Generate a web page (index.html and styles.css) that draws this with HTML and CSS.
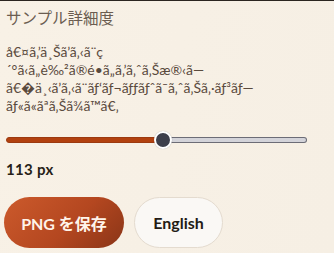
FILE: index.html
```html
<!DOCTYPE html>
<html lang="ja">
<head>
<meta charset="utf-8">
<link rel="stylesheet" href="styles.css">
</head>
<body>
<div class="panel">
  <h2 class="title">サンプル詳細度</h2>
  <p class="desc">å€¤ã‚’ä¸Šã’ã‚‹ã¨ç<wbr>´°ã‹ã„è‰²ã®é•ã„ã‚’ã‚ˆã‚Šæ®‹ã—ã€�ä¸‹ã’ã‚‹ã¨ãƒ‘ãƒ¬ãƒƒãƒˆã¯ã‚ˆã‚Šã‚·ãƒ³ãƒ—ãƒ«ã«ãªã‚Šã¾ã™ã€‚</p>
  <div class="slider">
    <div class="track">
      <div class="fill" style="width: 52.2%"></div>
      <div class="rest"></div>
    </div>
    <div class="thumb" style="left: 52.2%"></div>
  </div>
  <div class="value">113 px</div>
  <div class="actions">
    <button class="btn primary">PNG を保存</button>
    <button class="btn secondary">English</button>
  </div>
</div>
</body>
</html>
```
FILE: styles.css
```css
html, body {
  margin: 0;
  padding: 0;
}
body {
  width: 334px;
  height: 253px;
  overflow: hidden;
  background: linear-gradient(100deg, #f8f1e6 0%, #f6efe4 100%);
  border-top: 1px solid #2b2520;
  box-sizing: border-box;
  font-family: Lato, "Noto Sans CJK JP", sans-serif;
}
.panel {
  padding: 5px 27px 0 6px;
  display: flex;
  flex-direction: column;
}
.title {
  margin: 0;
  font-size: 15.5px;
  font-weight: 400;
  line-height: 24px;
  color: #6b5d51;
}
.desc {
  margin: 13px 24px 0 0;
  font-size: 14px;
  line-height: 18px;
  color: #5a4a3d;
}
.slider {
  position: relative;
  margin-top: 16px;
  height: 18px;
  display: flex;
  align-items: center;
}
.track {
  flex: 1;
  height: 6px;
  display: flex;
}
.fill {
  height: 6px;
  box-sizing: border-box;
  background: #b2410f;
  border: 1px solid #9c3a10;
  border-radius: 3px 0 0 3px;
}
.rest {
  flex: 1;
  height: 6px;
  box-sizing: border-box;
  background: #d3d3d9;
  border: 1px solid #6c6c76;
  border-left: none;
  border-radius: 0 3px 3px 0;
}
.thumb {
  position: absolute;
  top: 0;
  width: 18px;
  height: 18px;
  box-sizing: border-box;
  border-radius: 50%;
  background: #3c3e4a;
  border: 2px solid #ffffff;
  transform: translateX(-50%);
  box-shadow: 0 0 1px rgba(0,0,0,0.3);
}
.value {
  margin-top: 10px;
  font-size: 15px;
  font-weight: 700;
  line-height: 20px;
  color: #271f18;
  letter-spacing: 0.3px;
}
.actions {
  margin-top: 18px;
  margin-left: -2px;
  display: flex;
  gap: 10px;
}
.btn {
  height: 51px;
  border-radius: 26px;
  font-family: Lato, "Noto Sans CJK JP", sans-serif;
  font-size: 16px;
  font-weight: 700;
  padding: 0;
}
.primary {
  width: 120px;
  border: none;
  color: #fff4ea;
  background: linear-gradient(135deg, #cc5a2c 0%, #b44720 55%, #8a3517 100%);
}
.secondary {
  width: 89px;
  border: 1px solid #e4dbcf;
  background: #faf8f5;
  color: #231c16;
}
```
